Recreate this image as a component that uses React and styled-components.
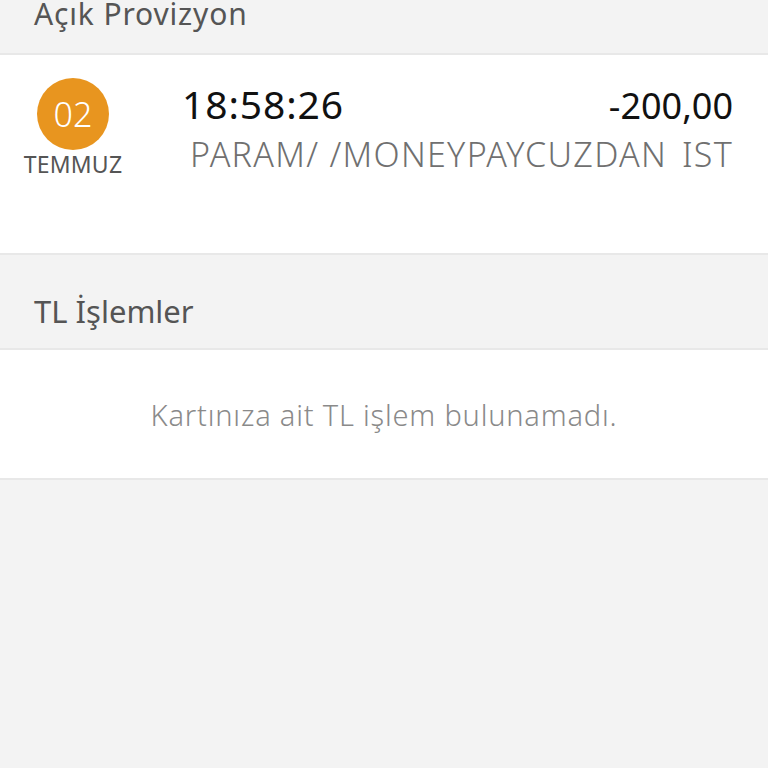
import React from "react";
import styled, { createGlobalStyle } from "styled-components";

const GlobalStyle = createGlobalStyle`
  html, body {
    margin: 0;
    padding: 0;
    background: #f3f3f3;
    font-family: "Noto Sans", "Open Sans", sans-serif;
  }
`;

const Page = styled.div`
  width: 768px;
  min-height: 768px;
  background: #f3f3f3;
  overflow: hidden;
`;

const SectionHeader = styled.div`
  height: ${props => props.height || 95}px;
  display: flex;
  align-items: ${props => props.align || "center"};
  padding: 0 34px;
  box-sizing: border-box;
  color: #555555;
  border-bottom: 2px solid #e8e8e8;
`;

const HeaderText = styled.span`
  font-size: ${props => props.size || 31}px;
  letter-spacing: ${props => props.spacing || 0}px;
  line-height: 1;
  margin-bottom: ${props => props.offset || 0}px;
  font-weight: 400;
`;

const Card = styled.div`
  background: #ffffff;
  border-bottom: 2px solid #e8e8e8;
`;

const TxRow = styled.div`
  height: 198px;
  display: flex;
  align-items: flex-start;
  padding: 23px 35px 0 24px;
  box-sizing: border-box;
`;

const DateBox = styled.div`
  width: 98px;
  display: flex;
  flex-direction: column;
  align-items: center;
`;

const DayCircle = styled.div`
  width: 72px;
  height: 72px;
  border-radius: 50%;
  background: #e8951f;
  color: #ffffff;
  font-size: 34px;
  font-weight: 300;
  display: flex;
  align-items: center;
  justify-content: center;
  line-height: 1;
`;

const Month = styled.div`
  margin-top: 3px;
  font-size: 23px;
  line-height: 1;
  color: #555555;
  letter-spacing: 0.2px;
`;

const TxBody = styled.div`
  flex: 1;
  margin-left: 60px;
  margin-top: 3px;
  display: flex;
  flex-direction: column;
`;

const TopLine = styled.div`
  display: flex;
  justify-content: space-between;
  align-items: baseline;
  color: #111111;
  line-height: 1.2;
`;

const Time = styled.span`
  font-size: 39px;
  letter-spacing: 0.9px;
`;

const Amount = styled.span`
  font-size: 36px;
`;

const Merchant = styled.div`
  display: flex;
  justify-content: space-between;
  padding-left: 8px;
  color: #707070;
  font-size: 34px;
  letter-spacing: 1.3px;
  line-height: 1.2;
  margin-top: 6px;
  font-weight: 300;
`;

const Empty = styled.div`
  height: 128px;
  display: flex;
  align-items: center;
  justify-content: center;
  color: #8a8a8a;
  font-size: 29px;
  letter-spacing: 0.8px;
  font-weight: 300;
`;

export default function App() {
  return (
    <Page>
      <GlobalStyle />
      <SectionHeader height={55} align="flex-end">
        <HeaderText size={30} spacing={0.85} offset={24}>Açık Provizyon</HeaderText>
      </SectionHeader>
      <Card>
        <TxRow>
          <DateBox>
            <DayCircle>02</DayCircle>
            <Month>TEMMUZ</Month>
          </DateBox>
          <TxBody>
            <TopLine>
              <Time>18:58:26</Time>
              <Amount>-200,00</Amount>
            </TopLine>
            <Merchant>
              <span>PARAM/ /MONEYPAYCUZDAN</span>
              <span>IST</span>
            </Merchant>
          </TxBody>
        </TxRow>
      </Card>
      <SectionHeader>
        <HeaderText size={31} offset={-20}>TL İşlemler</HeaderText>
      </SectionHeader>
      <Card>
        <Empty>Kartınıza ait TL işlem bulunamadı.</Empty>
      </Card>
    </Page>
  );
}
